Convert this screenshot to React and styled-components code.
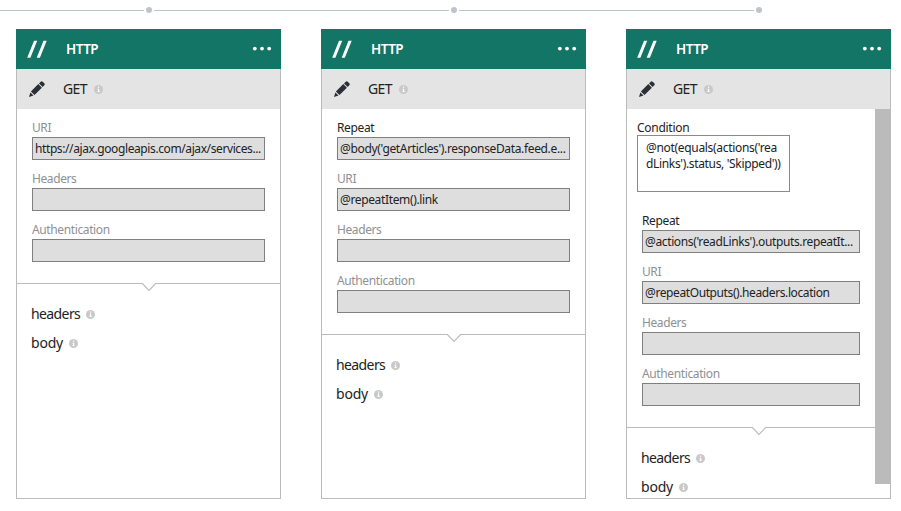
import React from "react";
import styled, { createGlobalStyle } from "styled-components";

const GlobalStyle = createGlobalStyle`
  * { box-sizing: border-box; }
  body {
    margin: 0;
    background: #fff;
    overflow: hidden;
    font-family: "Noto Sans", "Open Sans", sans-serif;
    color: #222;
  }
`;

const Designer = styled.main`
  width: 901px;
  height: 511px;
  overflow: hidden;
`;

const Connector = styled.div`
  height: 29px;
  display: flex;
  align-items: flex-start;
  padding-top: 7px;
`;

const Line = styled.span`
  width: ${(p) => p.$width}px;
  height: 1px;
  margin-top: 3px;
  background: #bfc3cb;
`;

const Dot = styled.span`
  width: 6px;
  height: 6px;
  margin: 0 2px;
  border-radius: 50%;
  background: #bfc3cb;
`;

const Cards = styled.div`
  display: flex;
  gap: 40px;
  padding-left: 16px;
`;

const Card = styled.section`
  width: 265px;
  height: 470px;
  flex: none;
  display: flex;
  flex-direction: column;
`;

const Header = styled.header`
  height: 40px;
  flex: none;
  display: flex;
  align-items: center;
  padding: 0 9px 0 10px;
  background: #127565;
  color: #fff;
`;

const Title = styled.h2`
  flex: 1;
  margin: 0 0 0 18px;
  font-size: 13.5px;
  line-height: 20px;
  font-weight: 600;
  letter-spacing: ${(p) => p.$track}px;
`;

const Frame = styled.div`
  flex: 1;
  min-height: 0;
  display: flex;
  flex-direction: column;
  border: 1px solid #bbb;
  border-top: 0;
`;

const Operation = styled.div`
  height: 40px;
  flex: none;
  display: flex;
  align-items: center;
  padding-left: 12px;
  background: #e4e4e4;
`;

const OperationName = styled.span`
  margin: 0 7px 0 18px;
  font-size: 14px;
  line-height: 20px;
  letter-spacing: -0.6px;
`;

const Viewport = styled.div`
  flex: 1;
  min-height: 0;
  display: flex;
  overflow: hidden;
`;

const Content = styled.div`
  flex: 1;
  min-width: 0;
`;

const ScrollThumb = styled.div`
  width: 16px;
  height: 375px;
  flex: none;
  margin-right: -1px;
  background: #bbb;
`;

const Fields = styled.div`
  display: flex;
  flex-direction: column;
  gap: 10px;
  padding: 10px 15px 21px;
`;

const FieldBlock = styled.div`
  display: flex;
  flex-direction: column;
`;

const Label = styled.label`
  display: block;
  height: 18px;
  font-size: 12px;
  line-height: 18px;
  color: ${(p) => (p.$strong ? "#222" : "#8e9194")};
  letter-spacing: ${(p) => p.$track}px;
`;

const Value = styled.div`
  height: 23px;
  padding-left: 2px;
  border: 1px solid #7f7f7f;
  background: #dedede;
  font-size: 12px;
  line-height: 21px;
  white-space: nowrap;
  letter-spacing: ${(p) => p.$track}px;
`;

const ConditionBlock = styled.div`
  height: 83px;
  margin: 0 0 0 -5px;
`;

const ConditionBox = styled.div`
  width: 153px;
  height: 57px;
  margin-top: -2px;
  padding: 4px 0 0 8px;
  border: 1px solid #8a8a8a;
  background: #fff;
  font-size: 12px;
  line-height: 16px;
`;

const ConditionLine = styled.div`
  white-space: nowrap;
  letter-spacing: ${(p) => p.$track}px;
`;

const Divider = styled.div`
  height: 9px;
  display: flex;
  align-items: flex-start;
`;

const Rule = styled.span`
  height: 1px;
  background: #bbb;
  ${(p) => (p.$grow ? "flex: 1;" : "width: 125px;")}
`;

const Outputs = styled.div`
  padding: 7px 0 0 14px;
`;

const Output = styled.div`
  height: 29px;
  display: flex;
  align-items: center;
  gap: 6px;
  font-size: 14px;
  line-height: 20px;

  svg {
    margin-top: 2px;
  }
`;

const OutputName = styled.span`
  letter-spacing: ${(p) => p.$track}px;
`;

const Svg = styled.svg`
  display: block;
  flex: none;
`;

const Slashes = () => (
  <Svg width="22" height="18" viewBox="0 0 22 18" fill="#fff">
    <path d="M8 0.7H11.2L4.4 17.7H1.2ZM17.5 0.7H20.7L13.9 17.7H10.7Z" />
  </Svg>
);

const Ellipsis = () => (
  <Svg width="20" height="6" viewBox="0 0 20 6" fill="#fff">
    <circle cx="2.8" cy="2.6" r="1.9" />
    <circle cx="10" cy="2.6" r="1.9" />
    <circle cx="17.2" cy="2.6" r="1.9" />
  </Svg>
);

const Pencil = () => (
  <Svg width="16" height="16" viewBox="0 0 16 16" fill="#2b3036">
    <path d="M0 16L1.4 11.5L4.5 14.6ZM1.9 10.5L9.3 3.1L12.9 6.7L5.5 14.1ZM10 2.4L11.7.7Q12.7 -.2 13.7.7L15.3 2.3Q16.2 3.3 15.3 4.3L13.6 6Z" />
  </Svg>
);

const Info = () => (
  <Svg width="9" height="9" viewBox="0 0 9 9">
    <circle cx="4.5" cy="4.5" r="4.5" fill="#c9c9c9" />
    <path d="M4 1.6h1.2v1.2H4zM3.5 3.7h1.7v2.6h.6v.7H3.4v-.7H4V4.4h-.5z" fill="#fff" />
  </Svg>
);

const Notch = () => (
  <Svg width="14" height="9" viewBox="0 0 14 9" fill="none" stroke="#bbb" strokeWidth="1.1">
    <path d="M0 .5H.4L7 7.5L13.6 .5H14" />
  </Svg>
);

const TRACK = { URI: -0.4, Headers: -0.4, Authentication: -0.38, Repeat: -0.35 };

const HTTP_CARDS = [
  {
    id: "articles",
    fields: [
      { label: "URI", value: "https://ajax.googleapis.com/ajax/services...", track: -0.4 },
      { label: "Headers" },
      { label: "Authentication" },
    ],
  },
  {
    id: "links",
    fields: [
      { label: "Repeat", value: "@body('getArticles').responseData.feed.e...", track: -0.35 },
      { label: "URI", value: "@repeatItem().link", track: -0.36 },
      { label: "Headers" },
      { label: "Authentication" },
    ],
  },
  {
    id: "redirects",
    condition: [
      { text: "@not(equals(actions('rea", track: -0.32 },
      { text: "dLinks').status, 'Skipped'))", track: -0.34 },
    ],
    scroll: true,
    fields: [
      { label: "Repeat", value: "@actions('readLinks').outputs.repeatIt...", track: -0.37 },
      { label: "URI", value: "@repeatOutputs().headers.location", track: -0.4 },
      { label: "Headers" },
      { label: "Authentication" },
    ],
  },
];

function Field({ label, value, track }) {
  return (
    <FieldBlock>
      <Label $strong={label === "Repeat"} $track={TRACK[label]}>{label}</Label>
      <Value $track={track || 0}>{value}</Value>
    </FieldBlock>
  );
}

function HttpCard({ card }) {
  return (
    <Card>
      <Header>
        <Slashes />
        <Title $track={-0.5}>HTTP</Title>
        <Ellipsis />
      </Header>
      <Frame>
        <Operation>
          <Pencil />
          <OperationName>GET</OperationName>
          <Info />
        </Operation>
        <Viewport>
          <Content>
            <Fields>
              {card.condition && (
                <ConditionBlock>
                  <Label $strong $track={-0.28}>Condition</Label>
                  <ConditionBox>
                    {card.condition.map((l) => (
                      <ConditionLine key={l.text} $track={l.track}>{l.text}</ConditionLine>
                    ))}
                  </ConditionBox>
                </ConditionBlock>
              )}
              {card.fields.map((f) => (
                <Field key={f.label} {...f} />
              ))}
            </Fields>
            <Divider>
              <Rule />
              <Notch />
              <Rule $grow />
            </Divider>
            <Outputs>
              <Output><OutputName $track={-0.6}>headers</OutputName><Info /></Output>
              <Output><OutputName $track={-0.2}>body</OutputName><Info /></Output>
            </Outputs>
          </Content>
          {card.scroll && <ScrollThumb />}
        </Viewport>
      </Frame>
    </Card>
  );
}

export default function App() {
  return (
    <Designer>
      <GlobalStyle />
      <Connector>
        <Line $width={144} />
        <Dot />
        <Line $width={295} />
        <Dot />
        <Line $width={295} />
        <Dot />
      </Connector>
      <Cards>
        {HTTP_CARDS.map((card) => (
          <HttpCard key={card.id} card={card} />
        ))}
      </Cards>
    </Designer>
  );
}
